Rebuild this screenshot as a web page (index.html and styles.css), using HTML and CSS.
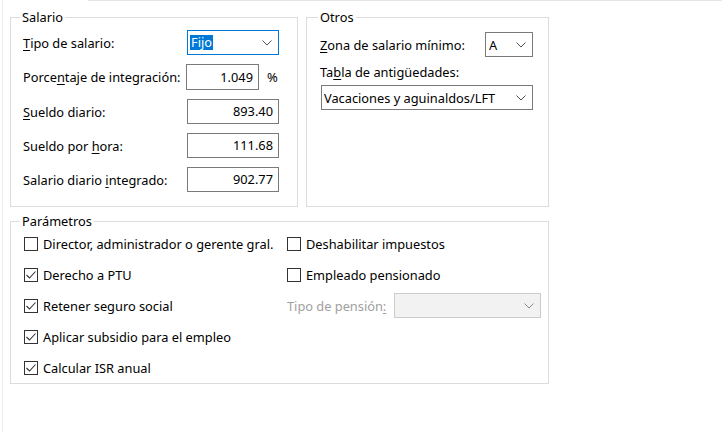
FILE: index.html
```html
<!DOCTYPE html>
<html lang="es">
<head>
<meta charset="utf-8">
<title>Salario</title>
<link rel="stylesheet" href="styles.css">
</head>
<body>
<div class="tabpage">
  <div class="tabedge"><div class="tabgap"></div><div class="tabline"></div></div>
  <div class="page">
    <div class="toprow">
      <fieldset class="group salario">
        <legend>Salario</legend>
        <div class="sgrid">
          <span class="lbl"><u>T</u>ipo de salario:</span>
          <div class="combo focus"><span class="hl">Fijo</span><svg class="chev" width="10" height="6" viewBox="0 0 10 6"><polyline points="0.5,0.5 5,5 9.5,0.5"/></svg></div>

          <span class="lbl">Porce<u>n</u>taje de integración:</span>
          <div class="pctwrap"><div class="field short">1.049</div><span class="pct">%</span></div>

          <span class="lbl"><u>S</u>ueldo diario:</span>
          <div class="field">893.40</div>

          <span class="lbl">Sueldo por <u>h</u>ora:</span>
          <div class="field">111.68</div>

          <span class="lbl">Salario diario <u>i</u>ntegrado:</span>
          <div class="field">902.77</div>
        </div>
      </fieldset>

      <fieldset class="group otros">
        <legend>Otros</legend>
        <div class="obody">
          <div class="orow">
            <span class="lbl"><u>Z</u>ona de salario mínimo:</span>
            <div class="combo small"><span>A</span><svg class="chev" width="10" height="6" viewBox="0 0 10 6"><polyline points="0.5,0.5 5,5 9.5,0.5"/></svg></div>
          </div>
          <span class="lbl tabla">Ta<u>b</u>la de antigüedades:</span>
          <div class="combo wide"><span>Vacaciones y aguinaldos/LFT</span><svg class="chev" width="10" height="6" viewBox="0 0 10 6"><polyline points="0.5,0.5 5,5 9.5,0.5"/></svg></div>
        </div>
      </fieldset>
    </div>

    <fieldset class="group params">
      <legend>Parámetros</legend>
      <div class="pcols">
        <div class="pcol left">
          <label class="chk"><span class="box"></span><span>Director, administrador o gerente gral.</span></label>
          <label class="chk"><span class="box"><svg width="12" height="12" viewBox="0 0 12 12"><polyline points="1.5,6 4.5,9 10.5,2.5"/></svg></span><span>Derecho a PTU</span></label>
          <label class="chk"><span class="box"><svg width="12" height="12" viewBox="0 0 12 12"><polyline points="1.5,6 4.5,9 10.5,2.5"/></svg></span><span>Retener seguro social</span></label>
          <label class="chk"><span class="box"><svg width="12" height="12" viewBox="0 0 12 12"><polyline points="1.5,6 4.5,9 10.5,2.5"/></svg></span><span>Aplicar subsidio para el empleo</span></label>
          <label class="chk"><span class="box"><svg width="12" height="12" viewBox="0 0 12 12"><polyline points="1.5,6 4.5,9 10.5,2.5"/></svg></span><span>Calcular ISR anual</span></label>
        </div>
        <div class="pcol right">
          <label class="chk"><span class="box"></span><span>Deshabilitar impuestos</span></label>
          <label class="chk"><span class="box"></span><span>Empleado pensionado</span></label>
          <div class="chk pension">
            <span class="dis">Tipo de pensión<u>:</u></span>
            <div class="combo disabled"><span></span><svg class="chev" width="10" height="6" viewBox="0 0 10 6"><polyline points="0.5,0.5 5,5 9.5,0.5"/></svg></div>
          </div>
        </div>
      </div>
    </fieldset>
  </div>
</div>
</body>
</html>
```

FILE: styles.css
```css
* { box-sizing: border-box; }

html, body {
  margin: 0;
  background: #ffffff;
}

body {
  font-family: "Noto Sans", "Open Sans", sans-serif;
  font-size: 12.8px;
  color: #000;
}

u { text-decoration: underline; text-underline-offset: 2px; }

.tabpage {
  height: 432px;
  margin-left: 2px;
  border-left: 1px solid #eeeeee;
  display: flex;
  flex-direction: column;
}

.tabedge { display: flex; height: 1px; }
.tabgap { width: 85px; }
.tabline { flex: 1; background: #e4e4e4; }

.page { padding: 8px 0 0 7px; }

.toprow {
  display: flex;
  gap: 8px;
  width: 539px;
}

.group {
  margin: 0;
  padding: 0;
  border: 1px solid #dcdcdc;
  min-width: 0;
}

.group legend {
  padding: 0 2px;
  margin-left: 9px;
  line-height: 16px;
}

/* Salario */
.salario { width: 288px; flex: none; }

.sgrid {
  display: grid;
  grid-template-columns: 164px 92px;
  grid-template-rows: 25px 26px 25px 25px 25px;
  row-gap: 9px;
  align-items: center;
  padding: 5px 17px 14px 12px;
}

.lbl { white-space: nowrap; }

.field {
  height: 25px;
  border: 1px solid #7a7a7a;
  background: #fff;
  text-align: right;
  padding-right: 5px;
  line-height: 23px;
}
.field.short { width: 73px; height: 26px; line-height: 24px; margin-left: -1px; }

.pctwrap { display: flex; align-items: center; gap: 8px; }
.pct { font-size: 13px; }

.combo {
  height: 25px;
  border: 1px solid #7a7a7a;
  background: #fff;
  display: flex;
  align-items: center;
  justify-content: space-between;
  padding: 0 6px 0 2px;
  white-space: nowrap;
}
.combo.focus { border-color: #0078d7; }
.hl {
  background: #0078d7;
  color: #fff;
  line-height: 15px;
  padding: 0 1px;
}

.chev polyline {
  fill: none;
  stroke: #505050;
  stroke-width: 1;
}

/* Otros */
.otros { flex: 1; }
.otros legend { margin-left: 11px; }
.obody {
  display: flex;
  flex-direction: column;
  padding: 7px 15px 0 13px;
}
.orow {
  display: flex;
  align-items: center;
  justify-content: space-between;
}
.combo.small { width: 48px; padding-left: 3px; }
.tabla { margin-top: 7px; line-height: 17px; }
.combo.wide { margin-top: 4px; margin-left: 1px; }

/* Parametros */
.params {
  width: 539px;
  margin-top: 6px;
}

.pcols {
  display: flex;
  padding: 0 7px 0 13px;
}

.pcol { display: flex; flex-direction: column; }
.pcol.left { width: 263px; }
.pcol.right { flex: 1; }

.chk {
  height: 30.8px;
  display: flex;
  align-items: center;
  gap: 5px;
  white-space: nowrap;
}

.box {
  width: 14px;
  height: 14px;
  border: 1px solid #333;
  background: #fff;
  display: flex;
  align-items: center;
  justify-content: center;
  flex: none;
}
.box polyline {
  fill: none;
  stroke: #333;
  stroke-width: 1.1;
}

.pension { gap: 6px; }
.dis { color: #a0a0a0; }
.combo.disabled {
  width: 147px;
  margin-left: auto;
  background: #f2f2f2;
  border-color: #cccccc;
}
.combo.disabled .chev polyline { stroke: #8a8a8a; }
```
